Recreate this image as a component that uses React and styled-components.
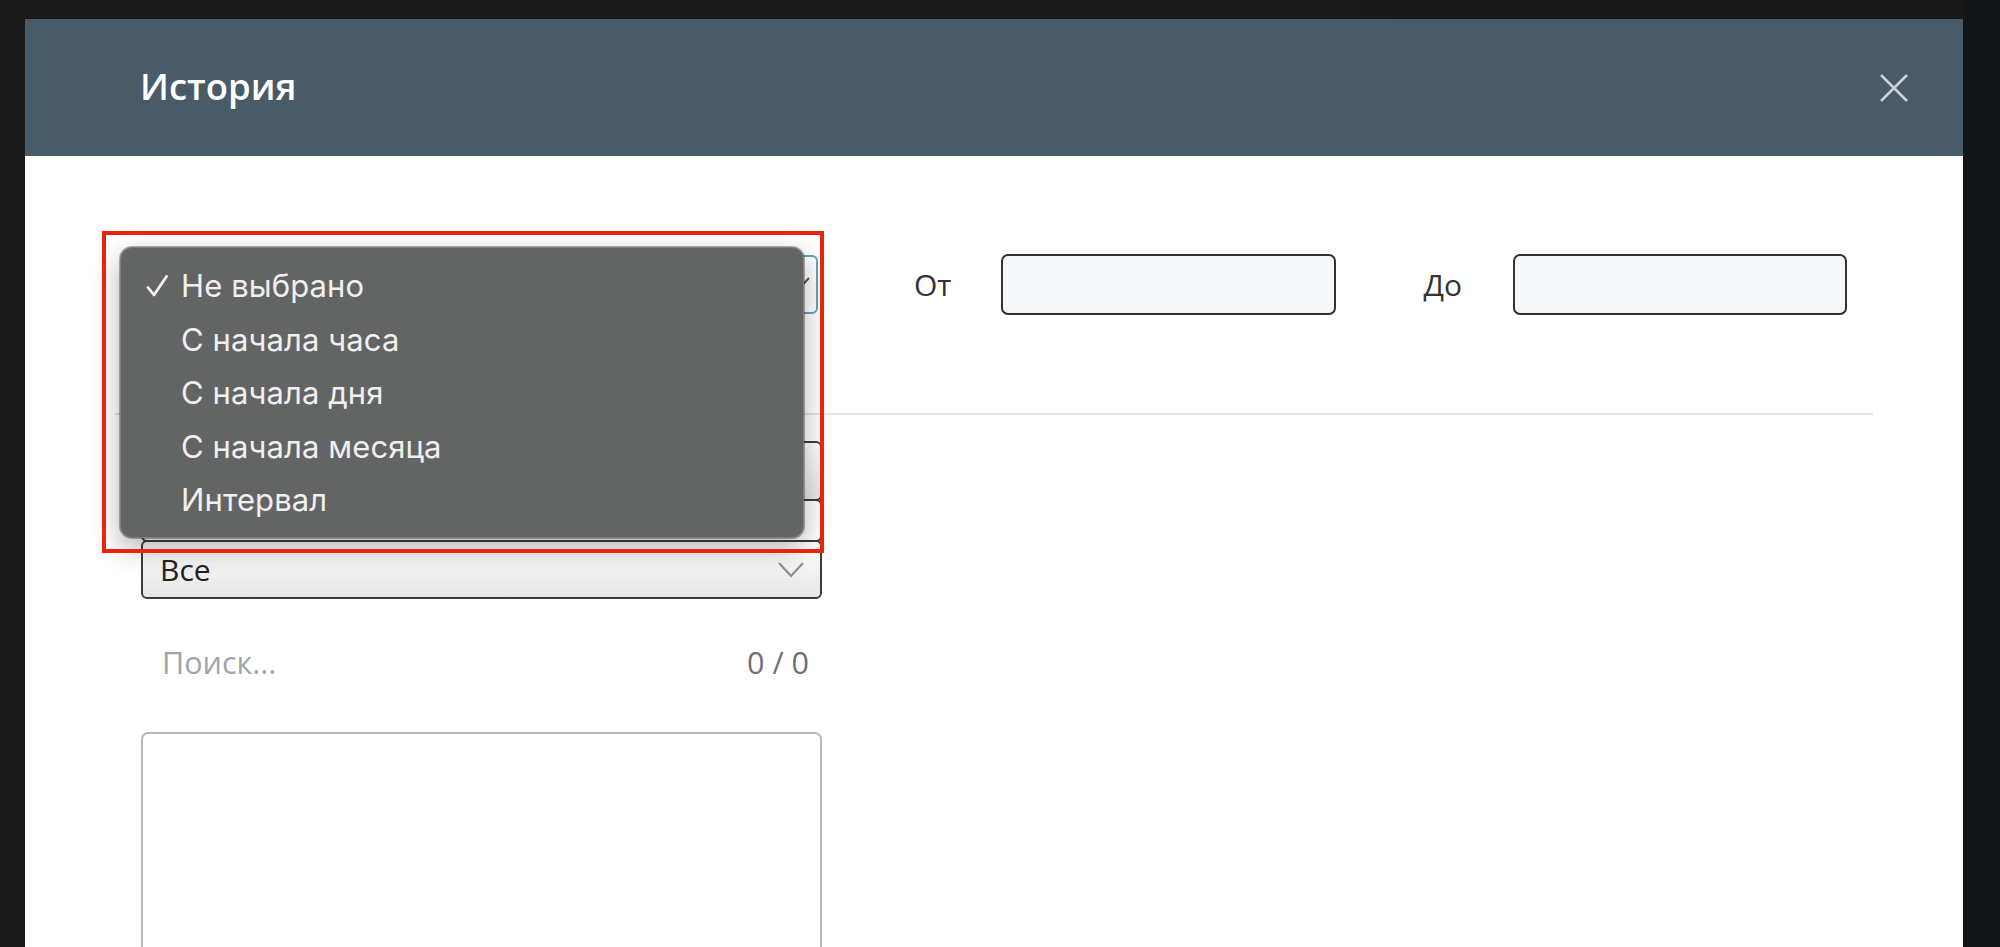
import React from 'react';
import styled, { createGlobalStyle } from 'styled-components';

const GlobalStyle = createGlobalStyle`
  html, body {
    margin: 0;
    padding: 0;
    height: 100%;
    overflow: hidden;
    background: #171717;
  }
  body {
    font-family: "Open Sans", "Liberation Sans", sans-serif;
  }
  * { box-sizing: border-box; }
`;

const Backdrop = styled.div`
  height: 947px;
  padding: 19px 37px 0 25px;
  background: linear-gradient(90deg, #1a1a1a 0, #171717 1963px, #121416 1963px);
  overflow: hidden;
`;

const Modal = styled.div`
  background: #fff;
  height: 100%;
  display: flex;
  flex-direction: column;
`;

const Header = styled.header`
  height: 137px;
  flex: none;
  background: #485b67;
  display: flex;
  align-items: center;
  justify-content: space-between;
  padding: 0 55px 0 115px;
`;

const Title = styled.h1`
  margin: 0;
  color: #fff;
  font-size: 36.5px;
  font-weight: 600;
  line-height: 1;
  padding-bottom: 2px;
`;

const CloseButton = styled.button`
  width: 28px;
  height: 28px;
  padding: 0;
  border: 0;
  background: none;
  cursor: pointer;
  display: flex;
`;

const Body = styled.div`
  position: relative;
  flex: 1;
  padding: 0 90px;
`;

const FilterRow = styled.div`
  display: flex;
  align-items: center;
  margin-top: 98px;
  padding-left: 26px;
  height: 61px;
`;

const Select = styled.div`
  position: relative;
  width: ${p => p.$width || 681}px;
  height: ${p => p.$height}px;
  border: 2px solid ${p => (p.$focused ? '#55a9bc' : '#3a3d40')};
  border-radius: 6px;
  background: ${p => (p.$plain ? '#fff' : 'linear-gradient(180deg, #ffffff 0%, #f4f4f4 45%, #e6e6e6 100%)')};
  display: flex;
  align-items: center;
  padding: 0 17px;
  font-size: 30px;
  color: #222;
`;

const Chevron = styled.svg`
  position: absolute;
  right: ${p => p.$right || 16}px;
  top: 50%;
  transform: translateY(-50%);
`;

const Label = styled.span`
  margin-left: ${p => p.$gap}px;
  font-size: 30px;
  color: #333;
  line-height: 1;
`;

const DateInput = styled.div`
  margin-left: ${p => p.$gap}px;
  width: ${p => p.$width}px;
  height: 61px;
  background: #f5f7f9;
  border: 2px solid #2f3336;
  border-radius: 7px;
`;

const Divider = styled.hr`
  margin: 98px 0 0;
  height: 2px;
  border: 0;
  background: #e4e4e4;
`;

const Column = styled.div`
  width: 707px;
  padding-left: 26px;
  display: flex;
  flex-direction: column;
`;

const Stack = styled.div`
  margin-top: 26px;
  display: flex;
  flex-direction: column;
`;

const SearchRow = styled.div`
  margin-top: 38px;
  height: 50px;
  display: flex;
  align-items: center;
  justify-content: space-between;
  padding: 0 13px 0 21px;
  font-size: 30.5px;
`;

const Placeholder = styled.span`
  color: #a0a5a9;
`;

const Counter = styled.span`
  color: #6d7175;
`;

const ListBox = styled.div`
  margin-top: 45px;
  height: 320px;
  border: 2px solid #b7babd;
  border-radius: 7px;
`;

const Highlight = styled.div`
  position: absolute;
  left: 77px;
  top: 75px;
  width: 722px;
  height: 322px;
  border: 4px solid #e8250c;
  pointer-events: none;
  z-index: 3;
`;

const Menu = styled.ul`
  position: absolute;
  left: 95px;
  top: 91px;
  width: 684px;
  height: 291px;
  margin: 0;
  padding: 11px 0 0;
  list-style: none;
  background: #636565;
  border: 1px solid #7d7f7f;
  border-radius: 12px;
  box-shadow: 0 0 0 1px rgba(0, 0, 0, 0.3), 0 10px 28px rgba(0, 0, 0, 0.3);
  z-index: 2;
`;

const MenuItem = styled.li`
  height: 53.5px;
  display: flex;
  align-items: center;
  padding-left: 25px;
  color: #f0f0f0;
  font-family: Inter, "Liberation Sans", sans-serif;
  font-size: 31px;
  letter-spacing: 0.1px;
`;

const CheckSlot = styled.span`
  width: 35px;
  height: 24px;
  display: flex;
  align-items: center;
`;

const periods = ['Не выбрано', 'С начала часа', 'С начала дня', 'С начала месяца', 'Интервал'];

const ChevronIcon = ({ right, color = '#8a8d90' }) => (
  <Chevron $right={right} width="26" height="16" viewBox="0 0 26 16">
    <path d="M1 1 L13 14 L25 1" fill="none" stroke={color} strokeWidth="2" />
  </Chevron>
);

export default function App() {
  return (
    <>
      <GlobalStyle />
      <Backdrop>
        <Modal>
          <Header>
            <Title>История</Title>
            <CloseButton aria-label="Закрыть">
              <svg width="28" height="28" viewBox="0 0 28 28">
                <path d="M1 1 L27 27 M27 1 L1 27" stroke="#cfd3d6" strokeWidth="2.5" />
              </svg>
            </CloseButton>
          </Header>
          <Body>
            <FilterRow>
              <Select $width={677} $height={59} $focused $plain>
                <ChevronIcon right={6} color="#555" />
              </Select>
              <Label $gap={96}>От</Label>
              <DateInput $gap={50} $width={335} />
              <Label $gap={87}>До</Label>
              <DateInput $gap={51} $width={334} />
            </FilterRow>
            <Divider />
            <Column>
              <Stack>
                <Select $height={60} />
                <Select $height={43} $plain style={{ marginTop: -2 }} />
                <Select $height={59} style={{ marginTop: -2 }}>
                  Все
                  <ChevronIcon right={16} />
                </Select>
              </Stack>
              <SearchRow>
                <Placeholder>Поиск...</Placeholder>
                <Counter>0 / 0</Counter>
              </SearchRow>
              <ListBox />
            </Column>
            <Menu>
              {periods.map((p, i) => (
                <MenuItem key={p}>
                  <CheckSlot>
                    {i === 0 && (
                      <svg width="22" height="22" viewBox="0 0 22 22">
                        <path
                          d="M2 12.5 L8 20 L20.5 1.5"
                          fill="none"
                          stroke="#f2f2f2"
                          strokeWidth="2.8"
                          strokeLinecap="round"
                          strokeLinejoin="round"
                        />
                      </svg>
                    )}
                  </CheckSlot>
                  {p}
                </MenuItem>
              ))}
            </Menu>
            <Highlight />
          </Body>
        </Modal>
      </Backdrop>
    </>
  );
}
